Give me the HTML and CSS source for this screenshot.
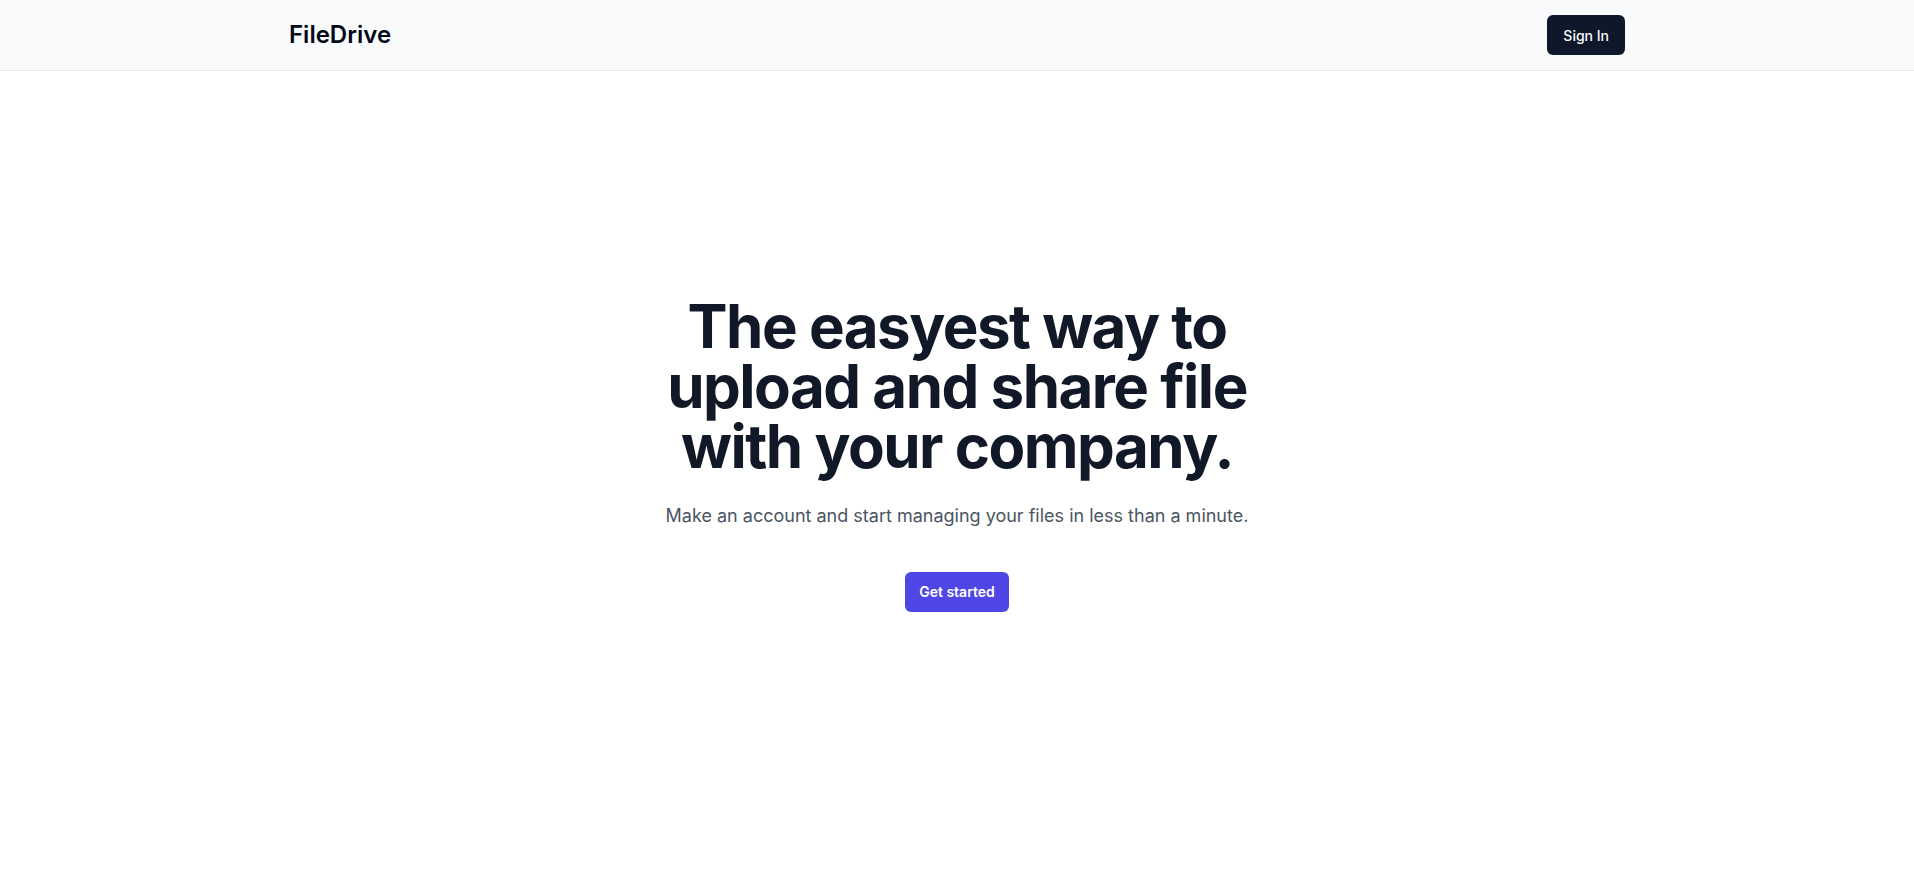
FILE: index.html
```html
<!DOCTYPE html>
<html lang="en">
<head>
<meta charset="utf-8">
<title>FileDrive</title>
<link rel="stylesheet" href="styles.css">
</head>
<body>
<header class="header">
  <div class="container header-inner">
    <div class="logo">FileDrive</div>
    <button class="btn-dark">Sign In</button>
  </div>
</header>
<main class="hero">
  <div class="hero-inner">
    <h1 class="hero-title">The easyest way to upload and share file with your company.</h1>
    <p class="hero-text">Make an account and start managing your files in less than a minute.</p>
    <div class="hero-actions">
      <a class="btn-primary" href="#">Get started</a>
    </div>
  </div>
</main>
</body>
</html>
```
FILE: styles.css
```css
* { box-sizing: border-box; }
html, body { margin: 0; padding: 0; }
body {
  font-family: Inter, "Noto Sans", sans-serif;
  background: #ffffff;
  color: #020817;
  -webkit-font-smoothing: antialiased;
}
.container {
  max-width: 1400px;
  margin: 0 auto;
  padding: 0 32px;
}
.header {
  background: #f9fafb;
  border-bottom: 1px solid #e5e7eb;
}
.header-inner {
  display: flex;
  align-items: center;
  justify-content: space-between;
  padding-top: 15px;
  padding-bottom: 15px;
}
.logo {
  font-size: 24px;
  font-weight: 600;
  line-height: 32px;
  color: #020817;
}
.btn-dark {
  height: 40px;
  padding: 0 16px;
  border: 0;
  border-radius: 6px;
  background: #0f172a;
  color: #f8fafc;
  font-family: Inter, sans-serif;
  font-size: 14px;
  font-weight: 500;
  cursor: pointer;
}
.hero {
  padding: 225px 24px 224px;
}
.hero-inner {
  max-width: 672px;
  margin: 0 auto;
  text-align: center;
}
.hero-title {
  margin: 0;
  font-size: 60px;
  line-height: 1;
  font-weight: 700;
  letter-spacing: -0.025em;
  color: #111827;
}
.hero-text {
  margin: 24px 0 0;
  font-size: 18px;
  line-height: 32px;
  color: #4b5563;
}
.hero-actions {
  margin-top: 40px;
  display: flex;
  justify-content: center;
  align-items: center;
}
.btn-primary {
  display: inline-block;
  padding: 10px 14px;
  border-radius: 6px;
  background: #4f46e5;
  color: #ffffff;
  font-size: 14px;
  line-height: 20px;
  font-weight: 600;
  text-decoration: none;
}
```
